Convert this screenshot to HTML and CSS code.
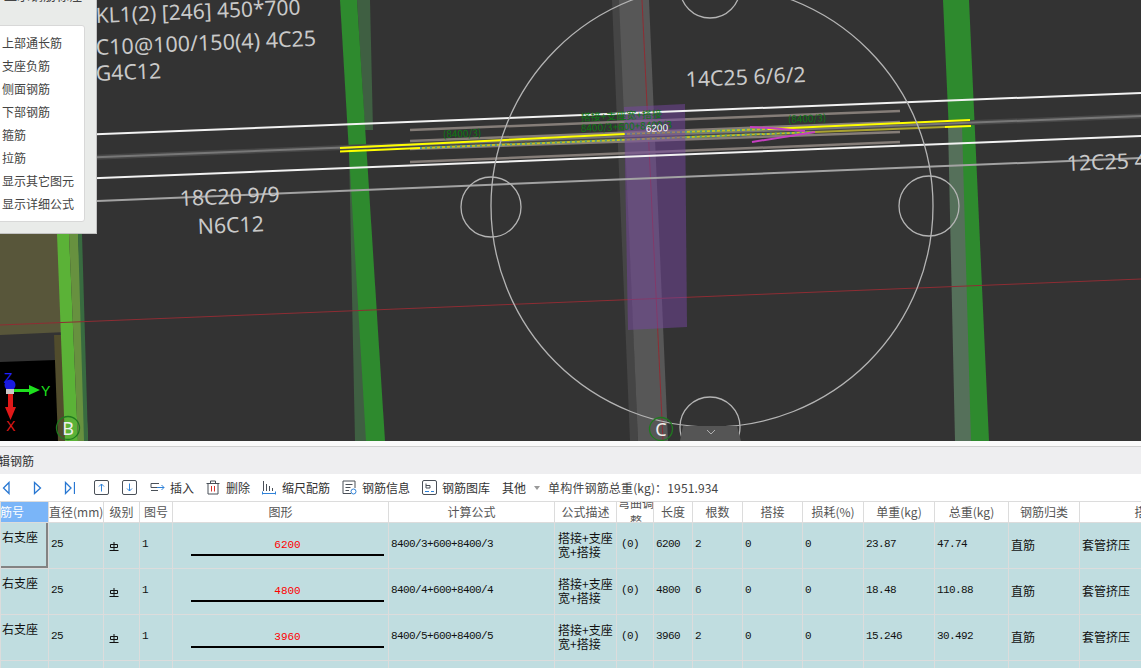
FILE: index.html
```html
<!DOCTYPE html>
<html lang="zh-CN">
<head>
<meta charset="utf-8">
<title>编辑钢筋</title>
<link rel="stylesheet" href="styles.css">
</head>
<body>
<div class="app">
  <section class="viewport">
    <svg class="scene" width="1141" height="441" viewBox="0 0 1141 441">
      <rect class="bg" width="1141" height="441"/>
      <polygon class="olive" points="0,234 62,234 66,332 0,335"/>
      <polygon class="corner-black" points="0,362 56,360 60,441 0,441"/>
      <polygon class="strip-olive" points="54,335 63,335 68,441 58,441"/>
      <polygon class="col-b" points="57,234 69,234 78,441 65,441"/>
      <polygon class="col-b-mid" points="69,234 78,234 88,441 78,441"/>
      <polygon class="col-b-dark" points="78,234 82,234 88,441 84,441"/>

      <polygon class="col-dim" points="357,0 370,0 373,130 365,130"/>
      <polygon class="col-dim" points="349,150 358,150 367,441 355,441"/>
      <polygon class="col-green" points="340,0 357,0 385,441 366,441"/>

      <polygon class="col-gray-dark" points="612,0 620,0 638,441 630,441"/>
      <polygon class="col-gray" points="619,0 649,0 668,441 638,441"/>
      <line class="axis-red" x1="642" y1="0" x2="663" y2="441"/>

      <polygon class="col-green" points="943,0 969,0 989,441 963,441"/>
      <polygon class="col-overlay" points="948,125 962,125 971,441 955,441"/>

      <line class="axis-red" x1="0" y1="325" x2="1141" y2="279"/>

      <line class="beam-gray-wide" x1="0" y1="161" x2="1141" y2="116"/>
      <line class="beam-gray" x1="0" y1="161" x2="1141" y2="116"/>

      <line class="rebar-taupe" x1="410" y1="130" x2="900" y2="111"/>
      <line class="rebar-taupe" x1="410" y1="141" x2="900" y2="122"/>
      <line class="rebar-taupe" x1="410" y1="149" x2="900" y2="132"/>
      <line class="rebar-taupe" x1="410" y1="162" x2="900" y2="142"/>

      <line class="rebar-yellow" x1="340" y1="148" x2="625" y2="134"/>
      <line class="rebar-dot-a" x1="625" y1="134" x2="768" y2="129"/>
      <line class="rebar-dot-b" x1="625" y1="134" x2="768" y2="129"/>
      <line class="rebar-yellow" x1="768" y1="129" x2="970" y2="120"/>
      <line class="rebar-yellow" x1="340" y1="151.500" x2="420" y2="148"/>
      <line class="rebar-dot-a" x1="420" y1="148" x2="815" y2="132"/>
      <line class="rebar-dot-b" x1="420" y1="148" x2="815" y2="132"/>
      <line class="rebar-dim" x1="815" y1="132" x2="945" y2="127"/>
      <line class="rebar-yellow" x1="945" y1="127" x2="971" y2="126"/>
      <polyline class="rebar-pink" points="750,127 770,128 805,131"/>
      <polyline class="rebar-pink" points="752,142 815,132"/>

      <polygon class="purple" points="624,107 685,104 687,327 628,330"/>

      <line class="beam-white" x1="0" y1="138" x2="1141" y2="93"/>
      <line class="beam-white" x1="0" y1="182" x2="1141" y2="136"/>
      <line class="beam-light" x1="0" y1="205" x2="1141" y2="158"/>

      <circle class="ring" cx="712" cy="206" r="221"/>
      <circle class="ring" cx="710" cy="-12" r="30"/>
      <circle class="ring" cx="491" cy="207" r="30"/>
      <circle class="ring" cx="929" cy="206" r="30"/>
      <circle class="ring" cx="710" cy="427" r="30"/>

      <text class="label label-top" transform="translate(96 23) rotate(-2.400)">KL1(2) [246] 450*700</text>
      <text class="label label-wide" transform="translate(96 55) rotate(-2.400)">C10@100/150(4) 4C25</text>
      <text class="label" transform="translate(96 81) rotate(-2.400)">G4C12</text>
      <text class="label" transform="translate(686 87) rotate(-2.400)">14C25 6/6/2</text>
      <text class="label" transform="translate(180 206) rotate(-2.400)">18C20 9/9</text>
      <text class="label" transform="translate(198 234) rotate(-2.400)">N6C12</text>
      <text class="label" transform="translate(1067 171) rotate(-2.400)">12C25 4</text>

      <text class="note" transform="translate(443 138) rotate(-2.400)">(8400/3)</text>
      <text class="note" transform="translate(788 123) rotate(-2.400)">(8400/3)</text>
      <text class="note" transform="translate(581 121) rotate(-2.400)">搭接+支座宽+搭接</text>
      <text class="note" transform="translate(581 132) rotate(-2.400)">8400/3+600+8400/3</text>
      <text class="dim-white" transform="translate(646 132) rotate(-2.400)">6200</text>

      <circle class="bubble" cx="68" cy="428" r="11.500"/>
      <text class="bubble-text" x="68" y="435">B</text>
      <circle class="bubble" cx="661" cy="429" r="11.500"/>
      <text class="bubble-text" x="661" y="436">C</text>

      <text class="axis-z" x="4" y="383">Z</text>
      <circle class="axis-z-dot" cx="10" cy="385" r="5.500"/>
      <rect class="axis-origin" x="6" y="389" width="8" height="5"/>
      <polygon class="axis-y-arrow" points="14,389 29,389 29,385 40,390 29,395 29,392 14,392"/>
      <text class="axis-y" x="41" y="396">Y</text>
      <polygon class="axis-x-arrow" points="8,394 13,394 13,407 16,407 10.500,420 5,407 8,407"/>
      <text class="axis-x" x="6" y="431">X</text>

      <polygon class="handle" points="683,426 737,426 741,441 680,441"/>
      <polyline class="chevron" points="707,430 711,434 715,430"/>
    </svg>

    <aside class="side-panel">
      <div class="side-title">显示钢筋标注</div>
      <ul class="side-list">
        <li>上部通长筋</li>
        <li>支座负筋</li>
        <li>侧面钢筋</li>
        <li>下部钢筋</li>
        <li>箍筋</li>
        <li>拉筋</li>
        <li>显示其它图元</li>
        <li>显示详细公式</li>
      </ul>
    </aside>
  </section>

  <section class="editor">
    <header class="editor-title"><span>编辑钢筋</span></header>
    <div class="toolbar">
      <div class="nav-group">
        <svg width="12" height="14" viewBox="0 0 12 14"><path class="ic-nav" d="M8 1.500 2.500 7 8 12.500Z"/></svg>
        <svg width="12" height="14" viewBox="0 0 12 14"><path class="ic-nav" d="M2.500 1.500 8.500 7 2.500 12.500Z"/></svg>
        <svg width="12" height="14" viewBox="0 0 12 14"><path class="ic-nav" d="M2.500 1.500 8 7 2.500 12.500ZM11.500 1V13"/></svg>
      </div>
      <div class="move-group">
        <svg width="15" height="15" viewBox="0 0 15 15"><rect class="ic-dark" x=".5" y=".5" width="14" height="14" rx="1.500"/><path class="ic-blue" d="M7.500 11.500V4M5 6.500 7.500 4 10 6.500"/></svg>
        <svg width="15" height="15" viewBox="0 0 15 15"><rect class="ic-dark" x=".5" y=".5" width="14" height="14" rx="1.500"/><path class="ic-blue" d="M7.500 3.500V11M5 8.500 7.500 11 10 8.500"/></svg>
      </div>
      <button class="tool tool-wide">
        <svg width="15" height="14" viewBox="0 0 15 14"><path class="ic-dark" d="M9 2.500H1V6.500H7M1 9.500H8"/><path class="ic-blue" d="M7 6.500H14M11.500 4 14 6.500 11.500 9"/></svg>
        <span>插入</span>
      </button>
      <button class="tool">
        <svg width="14" height="15" viewBox="0 0 14 15"><path class="ic-dark" d="M.5 3.500H13.500M4.500 3.500V1H9.500V3.500M2 3.500V14H12V3.500"/><path class="ic-red" d="M5.500 6V11.500M8.500 6V11.500"/></svg>
        <span>删除</span>
      </button>
      <button class="tool">
        <svg width="14" height="15" viewBox="0 0 14 15"><path class="ic-dark" d="M1.500 1V11M4.500 4V11M7.500 6V11M10.500 8V11"/><path class="ic-blue" d="M.5 13.500H13.500M.5 11.500V14.500M13.500 11.500V14.500"/></svg>
        <span>缩尺配筋</span>
      </button>
      <button class="tool tool-wide">
        <svg width="15" height="15" viewBox="0 0 15 15"><path class="ic-dark" d="M9 13.500H1V1H13V8M3.500 4.500H10.500M3.500 7.500H8.500M3.500 10.500H7"/><circle class="ic-blue" cx="11.500" cy="11.500" r="2.500"/></svg>
        <span>钢筋信息</span>
      </button>
      <button class="tool tool-wide">
        <svg width="15" height="15" viewBox="0 0 15 15"><rect class="ic-dark" x=".5" y=".5" width="14" height="14" rx="1.500"/><path class="ic-dark" d="M4 3.500V8H8V5.500H4"/><path class="ic-blue" d="M3 11.500H7M9 11.500H12"/></svg>
        <span>钢筋图库</span>
      </button>
      <button class="tool tool-menu">
        <span>其他</span><i class="caret"></i>
      </button>
      <span class="total">单构件钢筋总重(kg)：1951.934</span>
    </div>

    <div class="grid-wrap">
      <table class="grid">
        <colgroup>
          <col class="w48"><col class="w55"><col class="w36"><col class="w33"><col class="w216"><col class="w166"><col class="w62"><col class="w37"><col class="w39"><col class="w50"><col class="w60"><col class="w61"><col class="w71"><col class="w74"><col class="w71"><col class="w158">
        </colgroup>
        <thead>
          <tr>
            <th class="head-active"><div>钢筋号</div></th>
            <th>直径(mm)</th>
            <th>级别</th>
            <th>图号</th>
            <th>图形</th>
            <th>计算公式</th>
            <th>公式描述</th>
            <th class="head-wrap"><div><span>弯曲调整</span></div></th>
            <th>长度</th>
            <th>根数</th>
            <th>搭接</th>
            <th>损耗(%)</th>
            <th>单重(kg)</th>
            <th>总重(kg)</th>
            <th>钢筋归类</th>
            <th>搭接形式</th>
          </tr>
        </thead>
        <tbody>
          <tr>
            <td class="name selected">右支座</td>
            <td class="num">25</td>
            <td class="grade"><svg width="10" height="9" viewBox="0 0 10 9"><path d="M1.500 5.500V2.500H8.500V5.500H1.500M5 0V8M.5 8.500H9.500"/></svg></td>
            <td class="num">1</td>
            <td class="shape"><div class="bar">6200</div></td>
            <td class="num">8400/3+600+8400/3</td>
            <td class="desc">搭接+支座宽+搭接</td>
            <td class="num adj">(0)</td>
            <td class="num">6200</td>
            <td class="num">2</td>
            <td class="num">0</td>
            <td class="num">0</td>
            <td class="num">23.87</td>
            <td class="num">47.74</td>
            <td class="cn">直筋</td>
            <td class="cn">套管挤压</td>
          </tr>
          <tr>
            <td class="name">右支座</td>
            <td class="num">25</td>
            <td class="grade"><svg width="10" height="9" viewBox="0 0 10 9"><path d="M1.500 5.500V2.500H8.500V5.500H1.500M5 0V8M.5 8.500H9.500"/></svg></td>
            <td class="num">1</td>
            <td class="shape"><div class="bar">4800</div></td>
            <td class="num">8400/4+600+8400/4</td>
            <td class="desc">搭接+支座宽+搭接</td>
            <td class="num adj">(0)</td>
            <td class="num">4800</td>
            <td class="num">6</td>
            <td class="num">0</td>
            <td class="num">0</td>
            <td class="num">18.48</td>
            <td class="num">110.88</td>
            <td class="cn">直筋</td>
            <td class="cn">套管挤压</td>
          </tr>
          <tr>
            <td class="name">右支座</td>
            <td class="num">25</td>
            <td class="grade"><svg width="10" height="9" viewBox="0 0 10 9"><path d="M1.500 5.500V2.500H8.500V5.500H1.500M5 0V8M.5 8.500H9.500"/></svg></td>
            <td class="num">1</td>
            <td class="shape"><div class="bar">3960</div></td>
            <td class="num">8400/5+600+8400/5</td>
            <td class="desc">搭接+支座宽+搭接</td>
            <td class="num adj">(0)</td>
            <td class="num">3960</td>
            <td class="num">2</td>
            <td class="num">0</td>
            <td class="num">0</td>
            <td class="num">15.246</td>
            <td class="num">30.492</td>
            <td class="cn">直筋</td>
            <td class="cn">套管挤压</td>
          </tr>
          <tr>
            <td></td><td></td><td></td><td></td><td></td><td></td><td></td><td></td><td></td><td></td><td></td><td></td><td></td><td></td><td></td><td></td>
          </tr>
        </tbody>
      </table>
    </div>
  </section>
</div>
</body>
</html>
```

FILE: styles.css
```css
* { box-sizing: border-box; }
html, body { margin: 0; padding: 0; height: 668px; overflow: hidden; background: #fff; }
body { font-family: "Noto Sans CJK SC", "Noto Sans", sans-serif; font-size: 12px; color: #333; }
.app { display: flex; flex-direction: column; width: 1141px; height: 668px; overflow: hidden; }

/* 3D viewport */
.viewport { position: relative; flex: 0 0 441px; height: 441px; overflow: hidden; background: #333; }
.scene { display: block; }
.bg { fill: #333333; }
.olive { fill: #58563a; }
.corner-black { fill: #000; }
.strip-olive { fill: #514c2c; }
.col-b { fill: #5bb237; }
.col-b-mid { fill: #67913f; }
.col-b-dark { fill: #386b40; }
.col-green { fill: #2e8a2e; }
.col-dim { fill: #3f5f42; }
.col-overlay { fill: #55705a; }
.col-gray-dark { fill: #454545; }
.col-gray { fill: #575757; }
.axis-red { stroke: #8e2d34; stroke-width: 1; }
.rebar-taupe { stroke: #857d78; stroke-width: 2.5; }
.rebar-yellow { stroke: #ffff00; stroke-width: 2; }
.rebar-dim { stroke: #a9a230; stroke-width: 2; }
.rebar-dot-a { stroke: #c4c220; stroke-width: 2; }
.rebar-dot-b { stroke: #4f9a8c; stroke-width: 2; stroke-dasharray: 2 3; }
.rebar-pink { stroke: #c53fc0; stroke-width: 2; fill: none; }
.purple { fill: rgba(118, 70, 160, 0.5); }
.beam-white { stroke: #f2f2f2; stroke-width: 2; }
.beam-light { stroke: #a3a3a3; stroke-width: 2; }
.beam-gray-wide { stroke: #474747; stroke-width: 5; }
.beam-gray { stroke: #777; stroke-width: 2; }
.ring { fill: none; stroke: #b4b4b4; stroke-width: 1.3; }
.label { font-family: "Noto Sans", sans-serif; font-size: 21.3px; fill: #c9c9c9; }
.label-top { font-size: 21px; }
.label-wide { font-size: 21.5px; }
.note { font-family: "Noto Sans CJK SC", sans-serif; font-size: 10px; fill: #0c7a12; }
.dim-white { font-family: "Liberation Sans", sans-serif; font-size: 10px; fill: #fff; }
.bubble { fill: none; stroke: #1f7a1f; stroke-width: 1.3; }
.bubble-text { font-family: "Noto Sans", sans-serif; font-size: 18px; fill: #eee; text-anchor: middle; }
.axis-z { font-family: "Liberation Sans", sans-serif; font-size: 14px; fill: #2020ff; }
.axis-z-dot { fill: #1a1ae0; }
.axis-origin { fill: #c8c8c8; }
.axis-y-arrow { fill: #1ee01e; }
.axis-y { font-family: "Liberation Sans", sans-serif; font-size: 14px; fill: #1ee01e; }
.axis-x-arrow { fill: #e01818; }
.axis-x { font-family: "Liberation Sans", sans-serif; font-size: 14px; fill: #e01818; }
.handle { fill: #555; }
.chevron { fill: none; stroke: #b0b0b0; stroke-width: 1; }

/* floating checklist */
.side-panel { position: absolute; left: 0; top: 0; width: 97px; height: 234px; overflow: hidden; background: #e9ebe9; border-right: 1px solid #c2c2c2; border-bottom: 1px solid #c2c2c2; }
.side-title { height: 15px; line-height: 15px; margin-top: -13px; padding-left: 4px; font-size: 13px; white-space: nowrap; color: #444; }
.side-list { list-style: none; width: 90px; height: 197px; margin: 23px 0 0 -5px; padding: 5px 0 0 6px; background: #fff; border: 1px solid #d8d8d8; border-radius: 3px; }
.side-list li { height: 23px; line-height: 23px; font-size: 12px; color: #444; white-space: nowrap; }

/* editor */
.editor { flex: 1; display: flex; flex-direction: column; min-height: 0; overflow: hidden; background: #fff; }
.editor-title { flex: 0 0 33px; background: #eeeef0; border-top: 5px solid #fafafa; box-shadow: inset 0 1px 0 #cfcfcf; line-height: 29px; white-space: nowrap; overflow: hidden; }
.editor-title span { display: block; margin-left: -14px; color: #333; }
.toolbar { flex: 0 0 27px; display: flex; align-items: center; gap: 12px; padding-left: 1px; white-space: nowrap; }
.nav-group { display: flex; gap: 19px; margin-right: 7px; }
.move-group { display: flex; gap: 13px; margin-right: 1px; }
.nav-group svg, .move-group svg, .tool svg { display: block; flex: none; }
.tool { display: flex; align-items: center; gap: 6px; padding: 0; border: 0; background: none; font: inherit; color: #333; }
.tool-wide { gap: 5px; }
.tool-menu { gap: 8px; }
.caret { display: block; width: 0; height: 0; border: 3px solid transparent; border-top: 4px solid #999; border-bottom: 0; }
.total { margin-left: -4px; color: #444; letter-spacing: 0.15px; }
.ic-nav { fill: none; stroke: #2877d2; stroke-width: 1.3; }
.ic-blue { fill: none; stroke: #2f82d8; stroke-width: 1; }
.ic-dark { fill: none; stroke: #4a5058; stroke-width: 1; }
.ic-red { fill: none; stroke: #d8322a; stroke-width: 1; }

.grid-wrap { flex: 1; min-height: 0; overflow: hidden; }
.grid { table-layout: fixed; border-collapse: collapse; width: 1237px; }
.w48 { width: 48px; } .w55 { width: 55px; } .w36 { width: 36px; } .w33 { width: 33px; }
.w216 { width: 216px; } .w166 { width: 166px; } .w62 { width: 62px; } .w37 { width: 37px; }
.w39 { width: 39px; } .w50 { width: 50px; } .w60 { width: 60px; } .w61 { width: 61px; }
.w71 { width: 71px; } .w74 { width: 74px; } .w158 { width: 158px; }
.grid th, .grid td { padding: 0; border: 1px solid #dcdcdc; overflow: hidden; }
.grid th { height: 21px; font-weight: 400; font-size: 12px; line-height: 18px; color: #555; background: #fff; white-space: nowrap; }
.head-active { background: #7ab5f8 !important; color: #fff !important; text-align: left; }
.head-active div { margin-left: -13px; }
.head-wrap div { height: 20px; overflow: hidden; }
.head-wrap span { display: block; width: 38px; margin: -8px auto 0; white-space: normal; line-height: 18px; }
.grid td { height: 46px; background: #c0dde0; color: #111; font-size: 12px; padding-left: 3px; vertical-align: middle; }
.grid td.num { font-family: "Liberation Mono", monospace; font-size: 11px; letter-spacing: -0.6px; white-space: nowrap; padding: 0 0 3px 2px; }
.grid td.adj { padding-left: 4px; }
.grid td.name { padding: 0 0 18px 1px; color: #111; white-space: nowrap; }
.grid td.selected { background: #c4dfe2; box-shadow: inset -2px -2px 0 #838383; }
.grid td.grade { padding-left: 5px; }
.grade svg { display: block; margin-top: 1px; }
.grade path { fill: none; stroke: #111; stroke-width: 1; }
.grid td.shape { padding: 0 0 0 18px; }
.bar { width: 193px; height: 18px; margin-top: 2px; border-bottom: 2px solid #000; text-align: center; line-height: 15px; font-family: "Liberation Mono", monospace; font-size: 11px; color: #f00; }
.grid td.desc { line-height: 14px; padding: 0 2px 2px 3px; }
.grid td.cn { white-space: nowrap; padding: 0 0 3px 2px; }
```
